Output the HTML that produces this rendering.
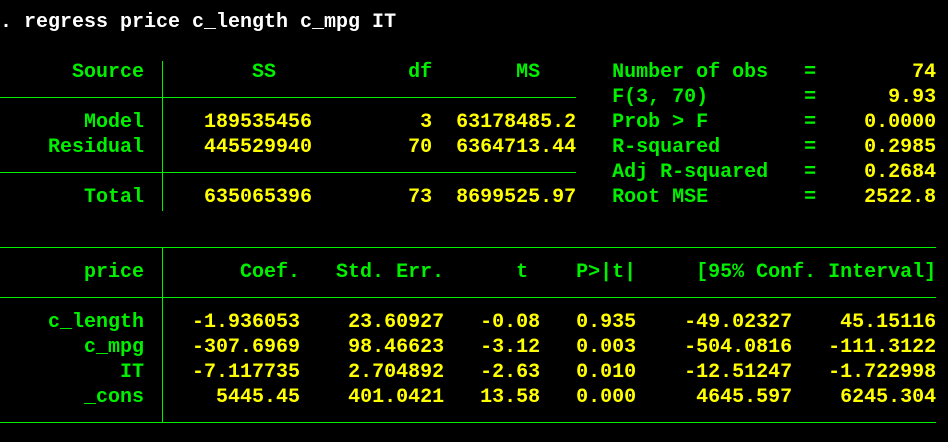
<!DOCTYPE html>
<html><head><style>
html,body{margin:0;padding:0;background:#000;width:948px;height:442px;overflow:hidden}
pre{position:absolute;left:0;top:10px;margin:0;font:bold 20px/25px "Liberation Mono",monospace;color:#fff;letter-spacing:0}
.g{color:#00f000}.y{color:#ffff00}
.h{position:absolute;height:1px;background:#00f000;left:0}
.v{position:absolute;width:1px;background:#00f000;left:162px}
</style></head><body>
<pre>. regress price c_length c_mpg IT

<span class="g">      Source         SS           df       MS      Number of obs   =        </span><span class="y">74</span>
<span class="g">                                                   F(3, 70)        =      </span><span class="y">9.93</span>
<span class="g">       Model</span><span class="y">     189535456         3  63178485.2</span><span class="g">   Prob &gt; F        =    </span><span class="y">0.0000</span>
<span class="g">    Residual</span><span class="y">     445529940        70  6364713.44</span><span class="g">   R-squared       =    </span><span class="y">0.2985</span>
<span class="g">                                                   Adj R-squared   =    </span><span class="y">0.2684</span>
<span class="g">       Total</span><span class="y">     635065396        73  8699525.97</span><span class="g">   Root MSE        =    </span><span class="y">2522.8</span>


<span class="g">       price        Coef.   Std. Err.      t    P&gt;|t|     [95% Conf. Interval]</span>

<span class="g">    c_length</span><span class="y">    -1.936053    23.60927   -0.08   0.935    -49.02327    45.15116</span>
<span class="g">       c_mpg</span><span class="y">    -307.6969    98.46623   -3.12   0.003    -504.0816   -111.3122</span>
<span class="g">          IT</span><span class="y">    -7.117735    2.704892   -2.63   0.010    -12.51247   -1.722998</span>
<span class="g">       _cons</span><span class="y">      5445.45    401.0421   13.58   0.000     4645.597    6245.304</span>
</pre>
<div class="h" style="top:97px;width:576px"></div>
<div class="h" style="top:172px;width:576px"></div>
<div class="v" style="top:61px;height:150px"></div>
<div class="h" style="top:247px;width:936px"></div>
<div class="h" style="top:297px;width:936px"></div>
<div class="h" style="top:422px;width:936px"></div>
<div class="v" style="top:247px;height:175px"></div>
</body></html>
